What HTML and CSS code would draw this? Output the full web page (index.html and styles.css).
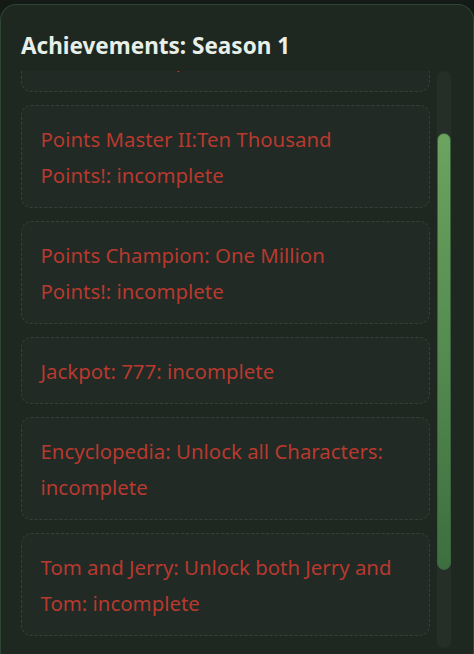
FILE: index.html
```html
<!DOCTYPE html>
<html lang="en">
<head>
<meta charset="utf-8">
<title>Achievements</title>
<link rel="stylesheet" href="styles.css">
</head>
<body>
<div class="panel">
  <h2 class="title">Achievements: Season 1</h2>
  <div class="scroller">
    <div class="list" id="list">
      <div class="card">Points Master I:One Thousand<br>Points!: incomplete</div>
      <div class="card">Points Master II:Ten Thousand<br>Points!: incomplete</div>
      <div class="card">Points Champion: One Million<br>Points!: incomplete</div>
      <div class="card">Jackpot: 777: incomplete</div>
      <div class="card">Encyclopedia: Unlock all Characters:<br>incomplete</div>
      <div class="card">Tom and Jerry: Unlock both Jerry and<br>Tom: incomplete</div>
      <div class="card">Marathon: Play One Hundred<br>Games!: incomplete</div>
    </div>
    <div class="track"><div class="thumb"></div></div>
  </div>
</div>
<script src="script.js"></script>
</body>
</html>
```
FILE: styles.css
```css
html, body {
  margin: 0;
  padding: 0;
  background: #141a16;
  height: 100%;
  overflow: hidden;
}
.panel {
  margin-top: 4px;
  background: #1f2721;
  border: 1px solid #2e4634;
  border-bottom: none;
  border-radius: 16px 16px 0 0;
  padding: 0 22px 0 20px;
  height: 700px;
  font-family: "Noto Sans", "Open Sans", sans-serif;
}
.title {
  margin: 0;
  padding: 26px 0 0 0;
  height: 40px;
  font-size: 22.5px;
  line-height: 30px;
  font-weight: 700;
  color: #e6efe8;
}
.scroller {
  display: flex;
  gap: 7px;
  height: 577px;
}
.list {
  flex: 1;
  min-width: 0;
  overflow: hidden;
  display: flex;
  flex-direction: column;
  gap: 13px;
}
.track {
  flex: none;
  width: 14px;
  background: #252e28;
  border-radius: 7px;
  padding-top: 62px;
  box-sizing: border-box;
}
.thumb {
  height: 437px;
  background: linear-gradient(180deg, #6ca35f 0%, #558b50 50%, #3d6e3f 100%);
  border: 1px solid #3b6340;
  border-radius: 7px;
  box-sizing: border-box;
}
.card {
  flex: none;
  background: #212a24;
  border: 1px dashed #364139;
  border-radius: 10px;
  padding: 14.5px 8px 14.5px 18.5px;
  font-size: 20.4px;
  line-height: 36px;
  color: #b8392f;
  white-space: nowrap;
}
```
FILE: script.js
```js
document.getElementById('list').scrollTop = 82;
```
